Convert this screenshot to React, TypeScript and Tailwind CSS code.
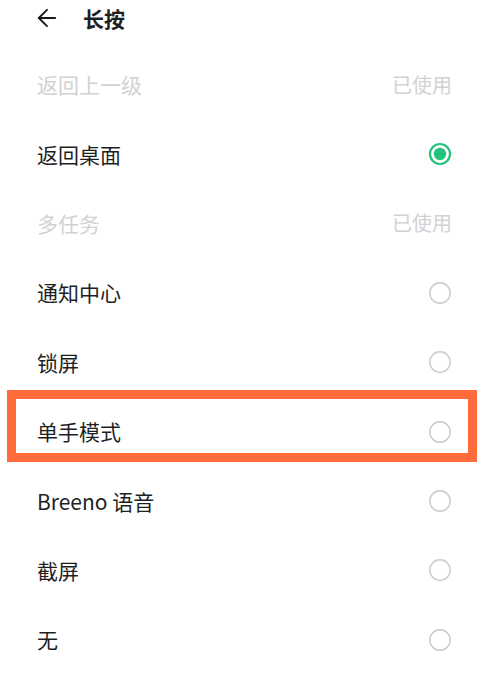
import { ArrowLeft } from "lucide-react";

type Option = {
  label: string;
  used?: boolean;
  selected?: boolean;
  highlight?: boolean;
};

const options: Option[] = [
  { label: "返回上一级", used: true },
  { label: "返回桌面", selected: true },
  { label: "多任务", used: true },
  { label: "通知中心" },
  { label: "锁屏" },
  { label: "单手模式", highlight: true },
  { label: "Breeno 语音" },
  { label: "截屏" },
  { label: "无" },
];

function Radio({ checked }: { checked?: boolean }) {
  if (checked) {
    return (
      <svg width="24" height="24" viewBox="0 0 24 24" aria-hidden>
        <circle cx="12" cy="12" r="10" fill="none" stroke="#22c27a" strokeWidth="2.2" />
        <circle cx="12" cy="12" r="6.2" fill="#22c27a" />
      </svg>
    );
  }
  return (
    <svg width="24" height="24" viewBox="0 0 24 24" aria-hidden>
      <circle cx="12" cy="12" r="10.2" fill="none" stroke="#cacaca" strokeWidth="1.4" />
    </svg>
  );
}

export default function App() {
  return (
    <div
      className="w-[481px] h-[673px] overflow-hidden bg-white text-[#1f1f1f]"
      style={{ fontFamily: '"Noto Sans CJK SC", "Noto Sans", sans-serif' }}
    >
      <header className="flex h-[36px] items-center pl-[33px]">
        <ArrowLeft size={28} strokeWidth={1.6} className="text-[#1a1a1a]" />
        <h1 className="ml-[22px] text-[21px] font-semibold leading-none">长按</h1>
      </header>

      <ul className="pt-[14px]">
        {options.map((o) => (
          <li
            key={o.label}
            className="relative flex h-[69.4px] items-center justify-between pl-[37px] pr-[29px]"
          >
            {o.highlight && (
              <span
                aria-hidden
                className="pointer-events-none absolute left-[7px] right-[4px] -top-[7px] bottom-[4px] border-[9px] border-[#ff6b3b]"
              />
            )}
            <span
              className={`text-[21px] leading-none ${o.used ? "text-[#d2d2d2]" : "text-[#1f1f1f]"}`}
            >
              {o.label}
            </span>
            {o.used ? (
              <span className="text-[20px] leading-none text-[#d2d2d2]">已使用</span>
            ) : (
              <Radio checked={o.selected} />
            )}
          </li>
        ))}
      </ul>
    </div>
  );
}
